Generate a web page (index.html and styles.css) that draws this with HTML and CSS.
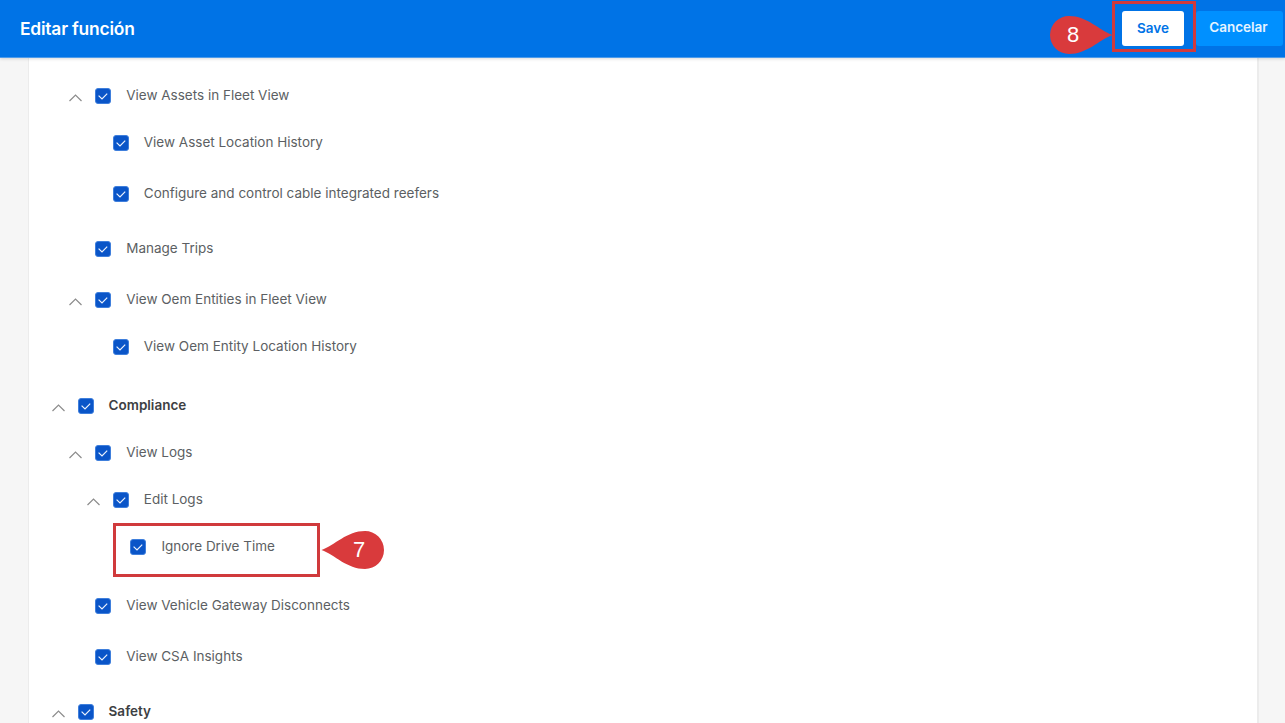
FILE: index.html
```html
<!DOCTYPE html>
<html lang="en">
<head>
    <meta charset="UTF-8">
    <meta name="viewport" content="width=device-width, initial-scale=1.0">
    <title>Editar función</title>
    <link rel="stylesheet" href="styles.css">
</head>
<body>
    <svg width="0" height="0" class="defs">
        <symbol id="chev" viewBox="0 0 21 8"><path d="M4.5 7 L10.5 1 L16.5 7" fill="none" stroke="#8c8c8c" stroke-width="1.2"/></symbol>
        <symbol id="check" viewBox="0 0 16 16"><path d="M3.6 7.6 L7 10.9 L12.2 5.6" fill="none" stroke="#eef4fd" stroke-width="1.2"/></symbol>
        <symbol id="drop" viewBox="0 0 64 40"><path d="M63.5 20 C50 15 38 1 20 1 A19 19 0 0 0 20 39 C38 39 50 25 63.5 20 Z" fill="#d93a3c"/></symbol>
    </svg>

    <header class="topbar">
        <h1>Editar función</h1>
        <div class="actions">
            <button class="btn btn-save">Save</button>
            <button class="btn btn-cancel">Cancelar</button>
        </div>
    </header>

    <main class="panel">
        <ul class="tree">
            <li>
                <ul class="sub">
                    <li>
                        <div class="row"><svg class="chev"><use href="#chev"/></svg><span class="box"><svg><use href="#check"/></svg></span><span class="label">View Assets in Fleet View</span></div>
                        <ul class="sub">
                            <li><div class="row"><span class="chev"></span><span class="box"><svg><use href="#check"/></svg></span><span class="label">View Asset Location History</span></div></li>
                            <li><div class="row"><span class="chev"></span><span class="box"><svg><use href="#check"/></svg></span><span class="label">Configure and control cable integrated reefers</span></div></li>
                        </ul>
                    </li>
                    <li><div class="row"><span class="chev"></span><span class="box"><svg><use href="#check"/></svg></span><span class="label">Manage Trips</span></div></li>
                    <li>
                        <div class="row"><svg class="chev"><use href="#chev"/></svg><span class="box"><svg><use href="#check"/></svg></span><span class="label">View Oem Entities in Fleet View</span></div>
                        <ul class="sub">
                            <li><div class="row"><span class="chev"></span><span class="box"><svg><use href="#check"/></svg></span><span class="label">View Oem Entity Location History</span></div></li>
                        </ul>
                    </li>
                </ul>
            </li>
            <li>
                <div class="row"><svg class="chev"><use href="#chev"/></svg><span class="box"><svg><use href="#check"/></svg></span><span class="label label-bold">Compliance</span></div>
                <ul class="sub">
                    <li>
                        <div class="row"><svg class="chev"><use href="#chev"/></svg><span class="box"><svg><use href="#check"/></svg></span><span class="label">View Logs</span></div>
                        <ul class="sub">
                            <li>
                                <div class="row"><svg class="chev"><use href="#chev"/></svg><span class="box"><svg><use href="#check"/></svg></span><span class="label">Edit Logs</span></div>
                                <ul class="sub">
                                    <li><div class="row"><span class="chev"></span><span class="box"><svg><use href="#check"/></svg></span><span class="label">Ignore Drive Time</span></div></li>
                                </ul>
                            </li>
                        </ul>
                    </li>
                    <li><div class="row"><span class="chev"></span><span class="box"><svg><use href="#check"/></svg></span><span class="label">View Vehicle Gateway Disconnects</span></div></li>
                    <li><div class="row"><span class="chev"></span><span class="box"><svg><use href="#check"/></svg></span><span class="label">View CSA Insights</span></div></li>
                </ul>
            </li>
            <li>
                <div class="row"><svg class="chev"><use href="#chev"/></svg><span class="box"><svg><use href="#check"/></svg></span><span class="label label-bold">Safety</span></div>
            </li>
        </ul>
    </main>

    <!-- tutorial annotations on top of the screenshot -->
    <div class="mark mark-save"></div>
    <div class="callout callout-save"><svg><use href="#drop"/></svg><span>8</span></div>
    <div class="mark mark-ignore"></div>
    <div class="callout callout-ignore"><svg><use href="#drop"/></svg><span>7</span></div>
</body>
</html>
```

FILE: styles.css
```css
* {
    margin: 0;
    padding: 0;
    box-sizing: border-box;
}

html, body {
    height: 723px;
    overflow: hidden;
}

body {
    position: relative;
    background: #f6f6f6;
    font-family: 'Inter', 'Liberation Sans', sans-serif;
}

.defs {
    position: absolute;
}

.topbar {
    position: relative;
    z-index: 1;
    display: flex;
    justify-content: space-between;
    height: 58px;
    padding: 11px 2px 0 20px;
    background: #0073e6;
    border-bottom: 1px solid #4d9bea;
    box-shadow: 0 1px 3px rgba(0, 0, 0, 0.15);
}

.topbar h1 {
    margin-top: 7px;
    font-size: 17.4px;
    line-height: 22px;
    font-weight: 600;
    color: #fff;
    letter-spacing: -0.2px;
}

.actions {
    display: flex;
    gap: 12px;
}

.btn {
    height: 35px;
    border: none;
    border-radius: 3px;
    font-family: inherit;
    font-size: 13.5px;
    font-weight: 600;
}

.btn-save {
    width: 62px;
    padding-bottom: 2px;
    background: #fff;
    color: #0073e6;
}

.btn-cancel {
    width: 87px;
    background: #0090ff;
    color: #e6f4ff;
    padding-bottom: 4px;
    padding-right: 2px;
}

.panel {
    width: 1231px;
    height: 665px;
    margin-left: 28px;
    padding: 26px 0 0 18.6px;
    background: #fff;
    border-left: 1px solid #ececec;
    border-right: 2px solid #ececec;
}

.tree, .sub {
    list-style: none;
}

.tree > li + li,
.sub > li + li {
    margin-top: 27px;
}

.tree > li:first-child > .sub {
    margin-top: 0;
}

.sub {
    margin-top: 23px;
    padding-left: 17.6px;
    padding-bottom: 4px;
}

.row {
    display: flex;
    align-items: center;
    height: 24px;
}

.chev {
    flex: none;
    width: 21px;
    height: 8px;
    margin-right: 9px;
    margin-top: 4px;
}

.box {
    flex: none;
    width: 16px;
    height: 16px;
    margin-right: 15px;
    background: #0a55c8;
    border: 1px solid #3f7fdc;
    border-radius: 3px;
    display: flex;
    align-items: center;
    justify-content: center;
}

.box svg {
    width: 16px;
    height: 16px;
    flex: none;
}

.label {
    padding-bottom: 3px;
    font-size: 13.5px;
    line-height: 20px;
    color: #5c5f63;
}

.label-bold {
    font-weight: 600;
    color: #3d4043;
}

.mark {
    position: absolute;
    border: 3px solid #d03a3c;
}

.mark-save {
    left: 1112px;
    top: 1px;
    width: 84px;
    height: 51px;
    z-index: 2;
}

.mark-ignore {
    left: 113px;
    top: 523px;
    width: 207px;
    height: 54px;
}

.callout {
    position: absolute;
    z-index: 2;
    width: 64px;
    height: 40px;
    color: #fff;
    font-family: 'Liberation Sans', sans-serif;
    font-size: 22px;
    line-height: 40px;
}

.callout svg {
    position: absolute;
    left: 0;
    top: 0;
    width: 64px;
    height: 40px;
}

.callout span {
    position: absolute;
    top: 0;
}

.callout-save {
    left: 1049px;
    top: 15px;
}

.callout-save span {
    left: 18px;
}

.callout-ignore {
    left: 321px;
    top: 530px;
}

.callout-ignore svg {
    transform: scaleX(-1);
}

.callout-ignore span {
    left: 32px;
}
```
